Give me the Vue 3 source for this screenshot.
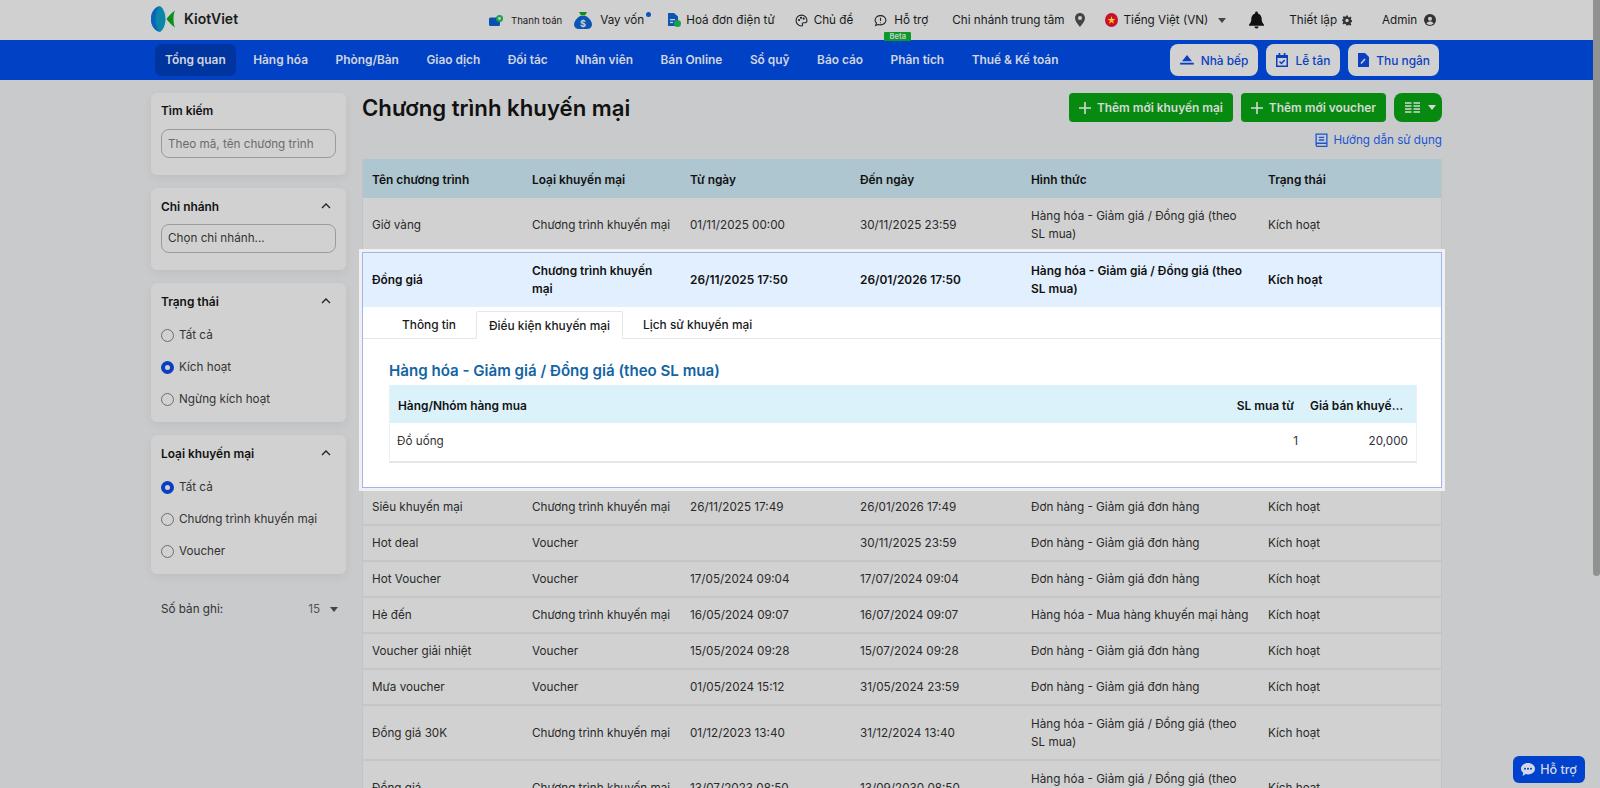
<script setup>
const navItems = ['Tổng quan','Hàng hóa','Phòng/Bàn','Giao dịch','Đối tác','Nhân viên','Bán Online','Sổ quỹ','Báo cáo','Phân tích','Thuế & Kế toán']
const cols = ['Tên chương trình','Loại khuyến mại','Từ ngày','Đến ngày','Hình thức','Trạng thái']
const CT = 'Chương trình khuyến mại'
const GG = 'Hàng hóa - Giảm giá / Đồng giá (theo SL mua)'
const DH = 'Đơn hàng - Giảm giá đơn hàng'
const KH = 'Kích hoạt'
const firstRow = ['Giờ vàng',CT,'01/11/2025 00:00','30/11/2025 23:59',GG,KH]
const openRow = ['Đồng giá',CT,'26/11/2025 17:50','26/01/2026 17:50',GG,KH]
const rows = [
  ['Siêu khuyến mại',CT,'26/11/2025 17:49','26/01/2026 17:49',DH,KH],
  ['Hot deal','Voucher','','30/11/2025 23:59',DH,KH],
  ['Hot Voucher','Voucher','17/05/2024 09:04','17/07/2024 09:04',DH,KH],
  ['Hè đến',CT,'16/05/2024 09:07','16/07/2024 09:07','Hàng hóa - Mua hàng khuyến mại hàng',KH],
  ['Voucher giải nhiệt','Voucher','15/05/2024 09:28','15/07/2024 09:28',DH,KH],
  ['Mưa voucher','Voucher','01/05/2024 15:12','31/05/2024 23:59',DH,KH],
  ['Đồng giá 30K',CT,'01/12/2023 13:40','31/12/2024 13:40',GG,KH],
  ['Đồng giá',CT,'13/07/2023 08:50','13/09/2030 08:50',GG,KH],
]
const statusOptions = [['Tất cả',false],['Kích hoạt',true],['Ngừng kích hoạt',false]]
const typeOptions = [['Tất cả',true],[CT,false],['Voucher',false]]
</script>

<template>
  <div class="page">
    <header class="topbar">
      <div class="wrap topbar-in">
        <div class="logo">
          <svg width="25" height="26" viewBox="0 0 25 26"><path d="M9 0C3.500 1 0 6.500 0 13s3.500 12 9 13c3.500-2.500 5.500-7.500 5.500-13S12.500 2.500 9 0z" fill="#0a86a8"/><path d="M8 .5C3 2 0 7 0 13s3 11 8 12.500C5.500 22 4.500 18 4.500 13S5.500 4 8 .5z" fill="#0b62c0"/><path d="M24 4.500c-1.200 2.500-1.500 5.500-1.500 8.500s.3 6 1.500 8.500c-3-2-6-5-8.500-8.500 2.500-3.500 5.500-6.500 8.500-8.500z" fill="#0a8f1a"/></svg>
          <span>KiotViet</span>
        </div>
        <div class="tools">
          <a class="tool t-pay">
            <svg width="14" height="11" viewBox="0 0 14 11"><rect x="0" y="2.500" width="11" height="8.500" rx="1.500" fill="#0b4fb0"/><circle cx="10.500" cy="3.500" r="3.500" fill="#17a34a"/><circle cx="10.500" cy="3.500" r="1.400" fill="#cfcfcf"/></svg>
            <span class="small">Thanh toán</span>
          </a>
          <a class="tool t-loan">
            <svg width="18" height="17" viewBox="0 0 18 17"><path d="M5 0h8l-2 3.500H7z" fill="#0a8f1a"/><path d="M6 4h6c4 2.500 6 6 6 8.500 0 2.700-2 4.500-5 4.500H5c-3 0-5-1.800-5-4.500C0 10 2 6.500 6 4z" fill="#0b55b5"/><text x="9" y="14.500" class="dollar">$</text></svg>
            <span>Vay vốn</span><i class="dot"></i>
          </a>
          <a class="tool t-inv">
            <svg width="14" height="14" viewBox="0 0 14 14"><path d="M1 0h6l4 3.500V13H1z" fill="#0b55b5"/><rect x="3" y="6" width="5" height="1.300" fill="#cfcfcf"/><rect x="3" y="8.800" width="3" height="1.300" fill="#cfcfcf"/><circle cx="10.500" cy="10.500" r="3.500" fill="#17a34a"/></svg>
            <span>Hoá đơn điện tử</span>
          </a>
          <a class="tool t-theme">
            <svg width="13" height="13" viewBox="0 0 24 24" fill="none" stroke="#222" stroke-width="2"><path d="M12 2a10 10 0 1 0 0 20c2 0 2.500-1.500 1.800-2.800-.8-1.500 0-3.200 2-3.200H19c2 0 3-1.500 3-4 0-5.500-4.500-10-10-10z"/><circle cx="7.500" cy="11" r="1" fill="#222"/><circle cx="11" cy="7" r="1" fill="#222"/><circle cx="16" cy="8.500" r="1" fill="#222"/></svg>
            <span>Chủ đề</span>
          </a>
          <a class="tool t-help">
            <svg width="13" height="13" viewBox="0 0 24 24" fill="none" stroke="#222" stroke-width="2"><path d="M12 3c5.500 0 10 3.700 10 8.500S17.500 20 12 20c-1.300 0-2.600-.2-3.700-.6L3 21l1.600-4.200C3 15.300 2 13.500 2 11.500 2 6.700 6.500 3 12 3z"/><path d="M12 7v6M12 15.500v1.500"/></svg>
            <span>Hỗ trợ</span>
            <b class="beta">Beta</b>
          </a>
          <a class="tool t-branch">
            <span>Chi nhánh trung tâm</span>
            <svg width="10" height="14" viewBox="0 0 10 14"><path d="M5 0C2.200 0 0 2.200 0 5c0 3.500 5 9 5 9s5-5.500 5-9c0-2.800-2.200-5-5-5zm0 7a2 2 0 1 1 0-4 2 2 0 0 1 0 4z" fill="#444"/></svg>
          </a>
          <a class="tool t-lang">
            <svg width="13" height="14" viewBox="0 0 13 14"><ellipse cx="6.500" cy="7" rx="6.500" ry="7" fill="#c8102e"/><path d="M6.500 3l1 3h3l-2.400 1.800.9 2.900-2.500-1.800-2.500 1.800.9-2.900L2.500 6h3z" fill="#f5c518"/></svg>
            <span>Tiếng Việt (VN)</span>
            <i class="caret dark"></i>
          </a>
          <a class="tool t-bell">
            <svg width="15" height="18" viewBox="0 0 16 18"><path d="M8 0a1.500 1.500 0 0 0-1.500 1.500v.6C4 2.800 2.500 5 2.500 7.500c0 3.500-1 5-2.500 6.500v1h16v-1c-1.500-1.500-2.500-3-2.500-6.500 0-2.500-1.500-4.700-4-5.400v-.6A1.500 1.500 0 0 0 8 0z" fill="#111"/><path d="M5.800 16a2.200 2 0 0 0 4.400 0z" fill="#111"/></svg>
          </a>
          <a class="tool t-set">
            <span>Thiết lập</span>
            <svg width="10" height="11" viewBox="0 0 24 24"><path d="M10 0h4l.7 3.500 2.400 1 3-2 2.800 2.800-2 3 1 2.400 3.100.7v4l-3.500.7-1 2.400 2 3-2.800 2.800-3-2-2.400 1L14 24h-4l-.7-3.500-2.400-1-3 2L1 18.700l2-3-1-2.400L-1 12.500v-2l3.500-.7 1-2.400-2-3L4.300 2l3 1 2.400-1zM12 8a4 4 0 1 0 0 8 4 4 0 0 0 0-8z" fill="#333" fill-rule="evenodd"/></svg>
          </a>
          <a class="tool t-admin">
            <span>Admin</span>
            <svg width="12" height="12" viewBox="0 0 12 12"><circle cx="6" cy="6" r="6" fill="#333"/><circle cx="6" cy="4.700" r="2" fill="#cfcfcf"/><path d="M2.500 9.500c.8-1.500 2-2 3.500-2s2.700.5 3.500 2c-.9.900-2.100 1.400-3.500 1.400s-2.600-.5-3.500-1.400z" fill="#cfcfcf"/></svg>
          </a>
        </div>
      </div>
    </header>

    <nav class="navbar">
      <div class="wrap nav-in">
        <div class="nav-list">
          <a v-for="(n, i) in navItems" :key="n" class="nav-item" :class="{ active: i === 0 }">{{ n }}</a>
        </div>
        <div class="nav-btns">
          <a class="nav-btn">
            <svg width="14" height="10" viewBox="0 0 15 11"><path d="M7.500 0L13 7H2z" fill="#0a3fc0"/><rect x="0" y="8.500" width="15" height="2" fill="#0a3fc0"/></svg>
            Nhà bếp
          </a>
          <a class="nav-btn">
            <svg width="12" height="14" viewBox="0 0 12 14"><path d="M0 2h12v12H0z" fill="#0a3fc0"/><rect x="2.500" y="0" width="1.800" height="3" fill="#0a3fc0"/><rect x="7.700" y="0" width="1.800" height="3" fill="#0a3fc0"/><rect x="1.500" y="5" width="9" height="7.500" fill="#d1d1d1"/><path d="M3.500 8.500l2 2 3.200-3.500" stroke="#0a3fc0" stroke-width="1.500" fill="none"/></svg>
            Lễ tân
          </a>
          <a class="nav-btn">
            <svg width="11" height="14" viewBox="0 0 11 14"><path d="M0 0h7l4 4v10H0z" fill="#0a3fc0"/><path d="M3 10.500L7 6" stroke="#d1d1d1" stroke-width="1.500"/></svg>
            Thu ngân
          </a>
        </div>
      </div>
    </nav>

    <div class="wrap content">
      <aside class="sidebar">
        <section class="card card-search">
          <h4>Tìm kiếm</h4>
          <input class="field" placeholder="Theo mã, tên chương trình" />
        </section>
        <section class="card card-branch">
          <div class="card-head"><h4>Chi nhánh</h4><svg class="chev" width="10" height="6" viewBox="0 0 10 6"><path d="M1 5l4-4 4 4" fill="none" stroke="#222" stroke-width="1.300"/></svg></div>
          <div class="field chosen">Chọn chi nhánh...</div>
        </section>
        <section class="card card-radios">
          <div class="card-head"><h4>Trạng thái</h4><svg class="chev" width="10" height="6" viewBox="0 0 10 6"><path d="M1 5l4-4 4 4" fill="none" stroke="#222" stroke-width="1.300"/></svg></div>
          <label v-for="o in statusOptions" :key="o[0]" class="radio"><i :class="{ on: o[1] }"></i>{{ o[0] }}</label>
        </section>
        <section class="card card-radios">
          <div class="card-head"><h4>Loại khuyến mại</h4><svg class="chev" width="10" height="6" viewBox="0 0 10 6"><path d="M1 5l4-4 4 4" fill="none" stroke="#222" stroke-width="1.300"/></svg></div>
          <label v-for="o in typeOptions" :key="o[0]" class="radio"><i :class="{ on: o[1] }"></i>{{ o[0] }}</label>
        </section>
        <div class="records"><span>Số bản ghi:</span><span class="count">15</span><i class="caret dark"></i></div>
      </aside>

      <main class="main">
        <div class="title-row">
          <h1>Chương trình khuyến mại</h1>
          <div class="actions">
            <a class="green"><svg width="12" height="12" viewBox="0 0 12 12"><path d="M6 0v12M0 6h12" stroke="#d8d8d8" stroke-width="1.600"/></svg>Thêm mới khuyến mại</a>
            <a class="green"><svg width="12" height="12" viewBox="0 0 12 12"><path d="M6 0v12M0 6h12" stroke="#d8d8d8" stroke-width="1.600"/></svg>Thêm mới voucher</a>
            <a class="green grid-btn">
              <svg width="15" height="11" viewBox="0 0 15 11"><path d="M0 1h6.500M8.500 1h6.500M0 4h6.500M8.500 4h6.500M0 7h6.500M8.500 7h6.500M0 10h6.500M8.500 10h6.500" stroke="#d8d8d8" stroke-width="1.400"/></svg>
              <i class="caret light"></i>
            </a>
          </div>
        </div>
        <a class="guide">
          <svg width="13" height="14" viewBox="0 0 12 13" fill="none" stroke="#1a55d0" stroke-width="1.200"><path d="M1 11V1h10v11.500H2.500A1.500 1.500 0 0 1 1 11a1.500 1.500 0 0 1 1.500-1.500H11"/><path d="M3.500 4h5M3.500 6.500h5"/></svg>
          Hướng dẫn sử dụng
        </a>

        <div class="table">
          <div class="t-row t-head"><div v-for="c in cols" :key="c">{{ c }}</div></div>
          <div class="t-row tall"><div v-for="(c, i) in firstRow" :key="i">{{ c }}</div></div>

          <div class="open-box">
            <div class="t-row open-row"><div v-for="(c, i) in openRow" :key="i">{{ c }}</div></div>
            <div class="tabs">
              <a class="tab">Thông tin</a>
              <a class="tab current">Điều kiện khuyến mại</a>
              <a class="tab">Lịch sử khuyến mại</a>
            </div>
            <div class="detail">
              <h3>Hàng hóa - Giảm giá / Đồng giá (theo SL mua)</h3>
              <div class="sub">
                <div class="sub-row sub-head">
                  <div>Hàng/Nhóm hàng mua</div>
                  <div class="qty-h">SL mua từ</div>
                  <div class="price-h"><span>Giá bán khuyến mại</span></div>
                </div>
                <div class="sub-row sub-body">
                  <div>Đồ uống</div>
                  <div class="qty">1</div>
                  <div class="price">20,000</div>
                </div>
              </div>
            </div>
          </div>

          <div v-for="(r, k) in rows" :key="k" class="t-row" :class="{ tall: r[4] === GG }">
            <div v-for="(c, i) in r" :key="i">{{ c }}</div>
          </div>
        </div>
      </main>
    </div>

    <a class="help-fab">
      <svg width="14" height="13" viewBox="0 0 14 13"><path d="M7 0c3.900 0 7 2.500 7 5.700s-3.100 5.700-7 5.700c-.8 0-1.500-.1-2.200-.3L1.500 13l.8-3.200C.9 8.800 0 7.300 0 5.700 0 2.500 3.100 0 7 0z" fill="#d4d8e6"/><circle cx="4" cy="5.700" r="1" fill="#0041cd"/><circle cx="7" cy="5.700" r="1" fill="#0041cd"/><circle cx="10" cy="5.700" r="1" fill="#0041cd"/></svg>
      Hỗ trợ
    </a>
    <i class="scroll-thumb"></i>
  </div>
</template>

<style scoped>
.page {
  min-height: 1078px;
  background: #c9cacc;
  color: #1a1a1a;
  font-family: Inter, "Noto Sans", sans-serif;
  font-size: 11.700px;
}
.wrap { width: 1291px; margin-left: 151px; }
a { text-decoration: none; color: inherit; }
svg { flex: none; }
i { display: block; font-style: normal; }

.topbar { height: 40px; background: #d0d0d0; }
.topbar-in { display: flex; align-items: center; height: 40px; }
.logo { display: flex; align-items: center; gap: 8px; width: 338px; padding-bottom: 3px; flex: none; font-weight: 600; font-size: 14px; color: #1c1c1c; }
.tools { display: flex; align-items: center; }
.tool { display: flex; align-items: center; gap: 6px; position: relative; white-space: nowrap; }
.small { font-size: 9.600px; margin-left: 2px; }
.dollar { font: 700 9px Inter, sans-serif; fill: #d0d0d0; text-anchor: middle; }
.dot { width: 5px; height: 5px; border-radius: 50%; background: #0b55b5; position: absolute; right: -7px; top: 0; }
.t-loan { margin-left: 12px; gap: 8px; }
.t-inv { margin-left: 23px; gap: 5px; }
.t-theme { margin-left: 20px; }
.t-help { margin-left: 21px; gap: 7px; }
.t-branch { margin-left: 24px; gap: 10px; }
.t-lang { margin-left: 20px; }
.t-lang .caret { margin-left: 4px; }
.t-bell { margin-left: 23px; }
.t-set { margin-left: 25px; gap: 5px; }
.t-admin { margin-left: 30px; gap: 7px; }
.beta {
  position: absolute; left: 10px; top: 19px; width: 27px; height: 9px; line-height: 9px; text-align: center;
  background: #0b9a2a; color: #d0d0d0; font-size: 7.500px; font-weight: 600; border-radius: 1px;
}
.caret { width: 0; height: 0; border-left: 4px solid transparent; border-right: 4px solid transparent; }
.caret.dark { border-top: 5px solid #444; }
.caret.light { border-top: 5px solid #d8d8d8; }

.navbar { height: 40px; background: #0041c6; }
.nav-in { display: flex; align-items: center; height: 40px; }
.nav-list { display: flex; margin-left: 4px; gap: 7.500px; }
.nav-item {
  height: 32px; line-height: 32px; padding: 0 10px; border-radius: 6px;
  color: #d2d6e0; font-weight: 600; font-size: 11.900px; white-space: nowrap;
}
.nav-item.active { background: #00349e; }
.nav-btns { display: flex; margin-left: auto; gap: 8px; margin-right: 3px; }
.nav-btn {
  display: flex; align-items: center; gap: 7px; height: 32px; padding: 0 10px; border-radius: 8px;
  background: #d1d1d1; color: #0a3fc0; font-weight: 500; font-size: 11.900px;
}
.nav-btn:last-child { padding-right: 9px; }

.content { display: grid; grid-template-columns: 195px 1fr; gap: 16px; padding-top: 13px; align-items: start; }
.sidebar { display: flex; flex-direction: column; gap: 13px; }
.card {
  background: #d1d1d1; border-radius: 6px; padding: 10px;
  box-shadow: 0 3px 10px rgba(0,0,0,.06);
}
.card h4 { margin: 0; font-size: 11.900px; font-weight: 600; color: #111; }
.card-search, .card-branch { height: 82px; box-sizing: border-box; }
.card-radios { height: 139px; box-sizing: border-box; }
.card-head { display: flex; justify-content: space-between; align-items: center; margin-bottom: 10px; padding-right: 5px; height: 16px; }
.card-search h4 { height: 16px; line-height: 16px; margin-bottom: 10px; }
.field {
  display: block; box-sizing: border-box; width: 175px; height: 29px; padding: 0 6px;
  border: 1px solid #9b9b9b; border-radius: 8px; background: transparent;
  font: 11.700px Inter, sans-serif; line-height: 27px; color: #333; outline: none;
}
.field::placeholder { color: #6c6c6c; opacity: 1; }
.radio { display: flex; align-items: center; gap: 5px; height: 32px; color: #333; white-space: nowrap; }
.radio i { box-sizing: border-box; width: 13px; height: 13px; border-radius: 50%; border: 1px solid #6d6d6d; }
.radio i.on { border: 4px solid #0a3fc0; background: #d1d1d1; }
.records { display: flex; align-items: center; padding: 15px 8px 0 10px; color: #333; }
.count { margin-left: auto; margin-right: 10px; color: #555; }

.title-row { display: flex; justify-content: space-between; align-items: center; height: 29px; }
h1 { margin: 0; font-size: 22.200px; font-weight: 600; color: #111; }
.actions { display: flex; gap: 8px; }
.green {
  display: flex; align-items: center; gap: 6px; height: 29px; padding: 0 10px; border-radius: 4px;
  background: #068b10; color: #d8d8d8; font-weight: 600; font-size: 11.900px;
}
.grid-btn { border-radius: 8px; padding: 0 6px 0 11px; gap: 8px; }
.guide {
  display: flex; align-items: center; justify-content: flex-end; gap: 5px; height: 16px; margin-top: 10px;
  color: #1a55d0; font-size: 11.700px;
}

.table { margin-top: 11px; border-left: 1px solid #c3c3c3; border-right: 1px solid #c3c3c3; }
.t-row {
  display: grid; grid-template-columns: 160px 158px 170px 171px 237px 1fr; align-items: center;
  min-height: 36px; background: #d1d1d1; border-bottom: 2px solid #c6c6c6; box-sizing: border-box;
  line-height: 18px; color: #2a2a2a;
}
.t-row > div { padding: 0 9px; }
.t-row.tall { min-height: 55px; }
.t-head { height: 39px; padding-top: 2px; background: #aec6cf; font-weight: 600; font-size: 11.900px; color: #111; border: 0; }

.open-box {
  position: relative; margin: -1px -1px 2px; border: 1px solid #9fb4f0; background: #fff;
  box-shadow: 0 0 0 3px #f0f0f0; height: 236px; box-sizing: border-box;
}
.open-row { background: #e1effe; min-height: 54px; border: 0; font-weight: 600; font-size: 11.900px; color: #111; }
.tabs { display: flex; height: 31px; padding-left: 26px; gap: 7px; border-bottom: 1px solid #e6e6e6; font-weight: 500; font-size: 11.900px; color: #1a1a1a; }
.tab { padding: 0 13px; margin-top: 4px; height: 27px; line-height: 27px; box-sizing: border-box; }
.tab.current { border: 1px solid #e6e6e6; border-bottom: 1px solid #fff; height: 28px; margin-bottom: -1px; padding: 0 12px; border-radius: 2px 2px 0 0; }
.detail { padding: 23px 24px 0 26px; }
h3 { margin: 0 0 5px; font-size: 15.100px; font-weight: 600; color: #1264a3; line-height: 18px; }
.sub { border: 1px solid #e6f2f7; border-width: 0 1px; border-bottom: 2px solid #e6e6e6; }
.sub-row { display: grid; grid-template-columns: 1fr 108px 113px; align-items: center; box-sizing: border-box; }
.sub-head { height: 38px; padding-top: 2px; background: #dbf2fb; font-weight: 600; font-size: 11.900px; color: #111; }
.sub-body { height: 38px; padding-bottom: 3px; color: #333; }
.sub-head > div:first-child { padding-left: 8px; }
.sub-body > div:first-child { padding-left: 7px; }
.qty-h { text-align: right; padding-right: 9px; }
.qty { text-align: right; padding-right: 5px; }
.price-h { padding-left: 7px; }
.price-h span { display: block; width: 93px; white-space: nowrap; overflow: hidden; text-overflow: ellipsis; }
.price { text-align: right; padding-right: 8px; }

.help-fab {
  position: fixed; right: 15px; bottom: 5px; width: 72px; height: 27px; box-sizing: border-box;
  display: flex; align-items: center; justify-content: center; gap: 5px;
  border-radius: 6px; background: #0041cd; color: #d4d8e6; font-size: 12.500px; font-weight: 500;
}
.scroll-thumb {
  position: fixed; top: 0; right: 0; width: 7px; height: 576px; background: #919191;
  border-radius: 0 0 4px 4px;
}
</style>

<style>
html, body { margin: 0; background: #c9cacc; }
html { scrollbar-width: none; }
</style>
